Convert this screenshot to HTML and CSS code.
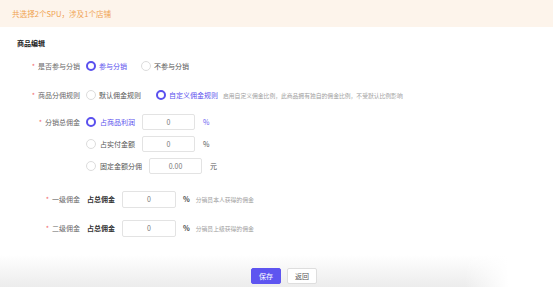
FILE: index.html
```html
<!DOCTYPE html>
<html lang="zh">
<head>
<meta charset="utf-8">
<link rel="stylesheet" href="styles.css">
</head>
<body>
<div class="banner">共选择2个SPU，涉及1个店铺</div>
<div class="content">
  <div class="title">商品编辑</div>

  <div class="item item-1">
    <div class="label"><span class="req">*</span>是否参与分销</div>
    <div class="field">
      <label class="radio checked"><span class="dot"></span>参与分销</label>
      <label class="radio gap-1"><span class="dot"></span>不参与分销</label>
    </div>
  </div>

  <div class="item item-2">
    <div class="label"><span class="req">*</span>商品分佣规则</div>
    <div class="field">
      <label class="radio"><span class="dot"></span>默认佣金规则</label>
      <label class="radio checked gap-2"><span class="dot"></span>自定义佣金规则</label>
      <span class="hint hint-rule">启用自定义佣金比例，此商品拥有独自的佣金比例，不受默认比例影响</span>
    </div>
  </div>

  <div class="item item-3">
    <div class="label"><span class="req">*</span>分销总佣金</div>
    <div class="options">
      <div class="opt">
        <label class="radio checked wide"><span class="dot"></span>占商品利润</label>
        <div class="input">0</div>
        <span class="unit purple">%</span>
      </div>
      <div class="opt">
        <label class="radio wide"><span class="dot"></span>占实付金额</label>
        <div class="input">0</div>
        <span class="unit">%</span>
      </div>
      <div class="opt">
        <label class="radio wide"><span class="dot"></span>固定金额分佣</label>
        <div class="input">0.00</div>
        <span class="unit">元</span>
      </div>
    </div>
  </div>

  <div class="item item-6">
    <div class="label"><span class="req">*</span>一级佣金</div>
    <div class="field">
      <span class="strong">占总佣金</span>
      <div class="input tall">0</div>
      <span class="unit bold">%</span>
      <span class="hint">分销员本人获得的佣金</span>
    </div>
  </div>

  <div class="item item-7">
    <div class="label"><span class="req">*</span>二级佣金</div>
    <div class="field">
      <span class="strong">占总佣金</span>
      <div class="input tall">0</div>
      <span class="unit bold">%</span>
      <span class="hint">分销员上级获得的佣金</span>
    </div>
  </div>
</div>
<div class="footer">
  <button class="btn primary">保存</button>
  <button class="btn">返回</button>
</div>
</body>
</html>
```
FILE: styles.css
```css
* { box-sizing: border-box; }
html, body {
  margin: 0;
  padding: 0;
  background: #fff;
  font-family: "Noto Sans CJK SC", "Noto Sans", sans-serif;
  color: #555;
}
body { width: 553px; height: 287px; overflow: hidden; }

.banner {
  height: 27px;
  line-height: 27px;
  padding-left: 12px;
  background: #fdf4eb;
  color: #f0a250;
  font-size: 7.6px;
}

.content { padding-left: 17px; padding-top: 11px; }

.title {
  height: 10px;
  line-height: 10px;
  font-size: 7px;
  font-weight: 700;
  color: #222;
}

.item { display: flex; align-items: flex-start; }
.label {
  width: 63px;
  flex: none;
  text-align: right;
  font-size: 7px;
  color: #666;
  height: 16px;
  line-height: 16px;
  margin-right: 6px;
  white-space: nowrap;
}
.req { color: #f26b6b; margin-right: 3px; }

.field { display: flex; align-items: center; height: 16px; font-size: 7px; }

.item-1 { margin-top: 10px; }
.item-2 { margin-top: 13px; }
.item-3 { margin-top: 11px; }
.item-6 { margin-top: 17px; }
.item-7 { margin-top: 12px; }
.item-6 .label, .item-7 .label, .item-6 .field, .item-7 .field { height: 17px; line-height: 17px; }

.radio {
  display: flex;
  align-items: center;
  font-size: 7px;
  color: #555;
  white-space: nowrap;
}
.dot {
  width: 10px;
  height: 10px;
  border-radius: 50%;
  border: 1px solid #dcdcdc;
  background: #fff;
  margin-right: 3px;
  flex: none;
}
.radio.checked { color: #5a50ee; }
.radio.checked .dot { border: 2.5px solid #5a50ee; }
.gap-1 { margin-left: 14px; }
.gap-2 { margin-left: 15px; }
.radio.wide .dot { margin-right: 4px; }

.hint { font-size: 5.8px; color: #a0a0a0; margin-left: 6px; white-space: nowrap; }
.hint-rule { margin-left: 5px; }

.options { display: flex; flex-direction: column; gap: 6px; }
.opt { display: flex; align-items: center; height: 16px; }

.input {
  width: 53px;
  height: 16px;
  border: 1px solid #e3e3e3;
  border-radius: 2px;
  display: flex;
  align-items: center;
  justify-content: center;
  font-size: 7px;
  color: #777;
  margin-left: 7px;
  flex: none;
}
.input.tall { height: 17px; margin-left: 7px; width: 54px; }

.unit { font-size: 7px; color: #555; margin-left: 8px; }
.unit.purple { color: #6a60f0; }
.unit.bold { font-weight: 700; color: #444; margin-left: 7px; }

.strong { font-size: 7px; font-weight: 700; color: #333; margin-left: 1px; }

.footer {
  margin-top: 18px;
  height: 32px;
  padding-top: 13px;
  padding-left: 15px;
  display: flex;
  justify-content: center;
  gap: 6px;
  background:
    linear-gradient(to right, rgba(255,255,255,0) 84%, #fff 92%),
    linear-gradient(to bottom, #fff 0%, #ececec 100%);
}
.btn {
  width: 30px;
  height: 16px;
  padding: 0;
  margin: 0;
  border: 1px solid #dedede;
  border-radius: 2px;
  background: #fff;
  color: #555;
  font-family: inherit;
  font-size: 7px;
  line-height: 14px;
}
.btn.primary {
  background: #5e55f0;
  border-color: #5e55f0;
  color: #fff;
}
```
